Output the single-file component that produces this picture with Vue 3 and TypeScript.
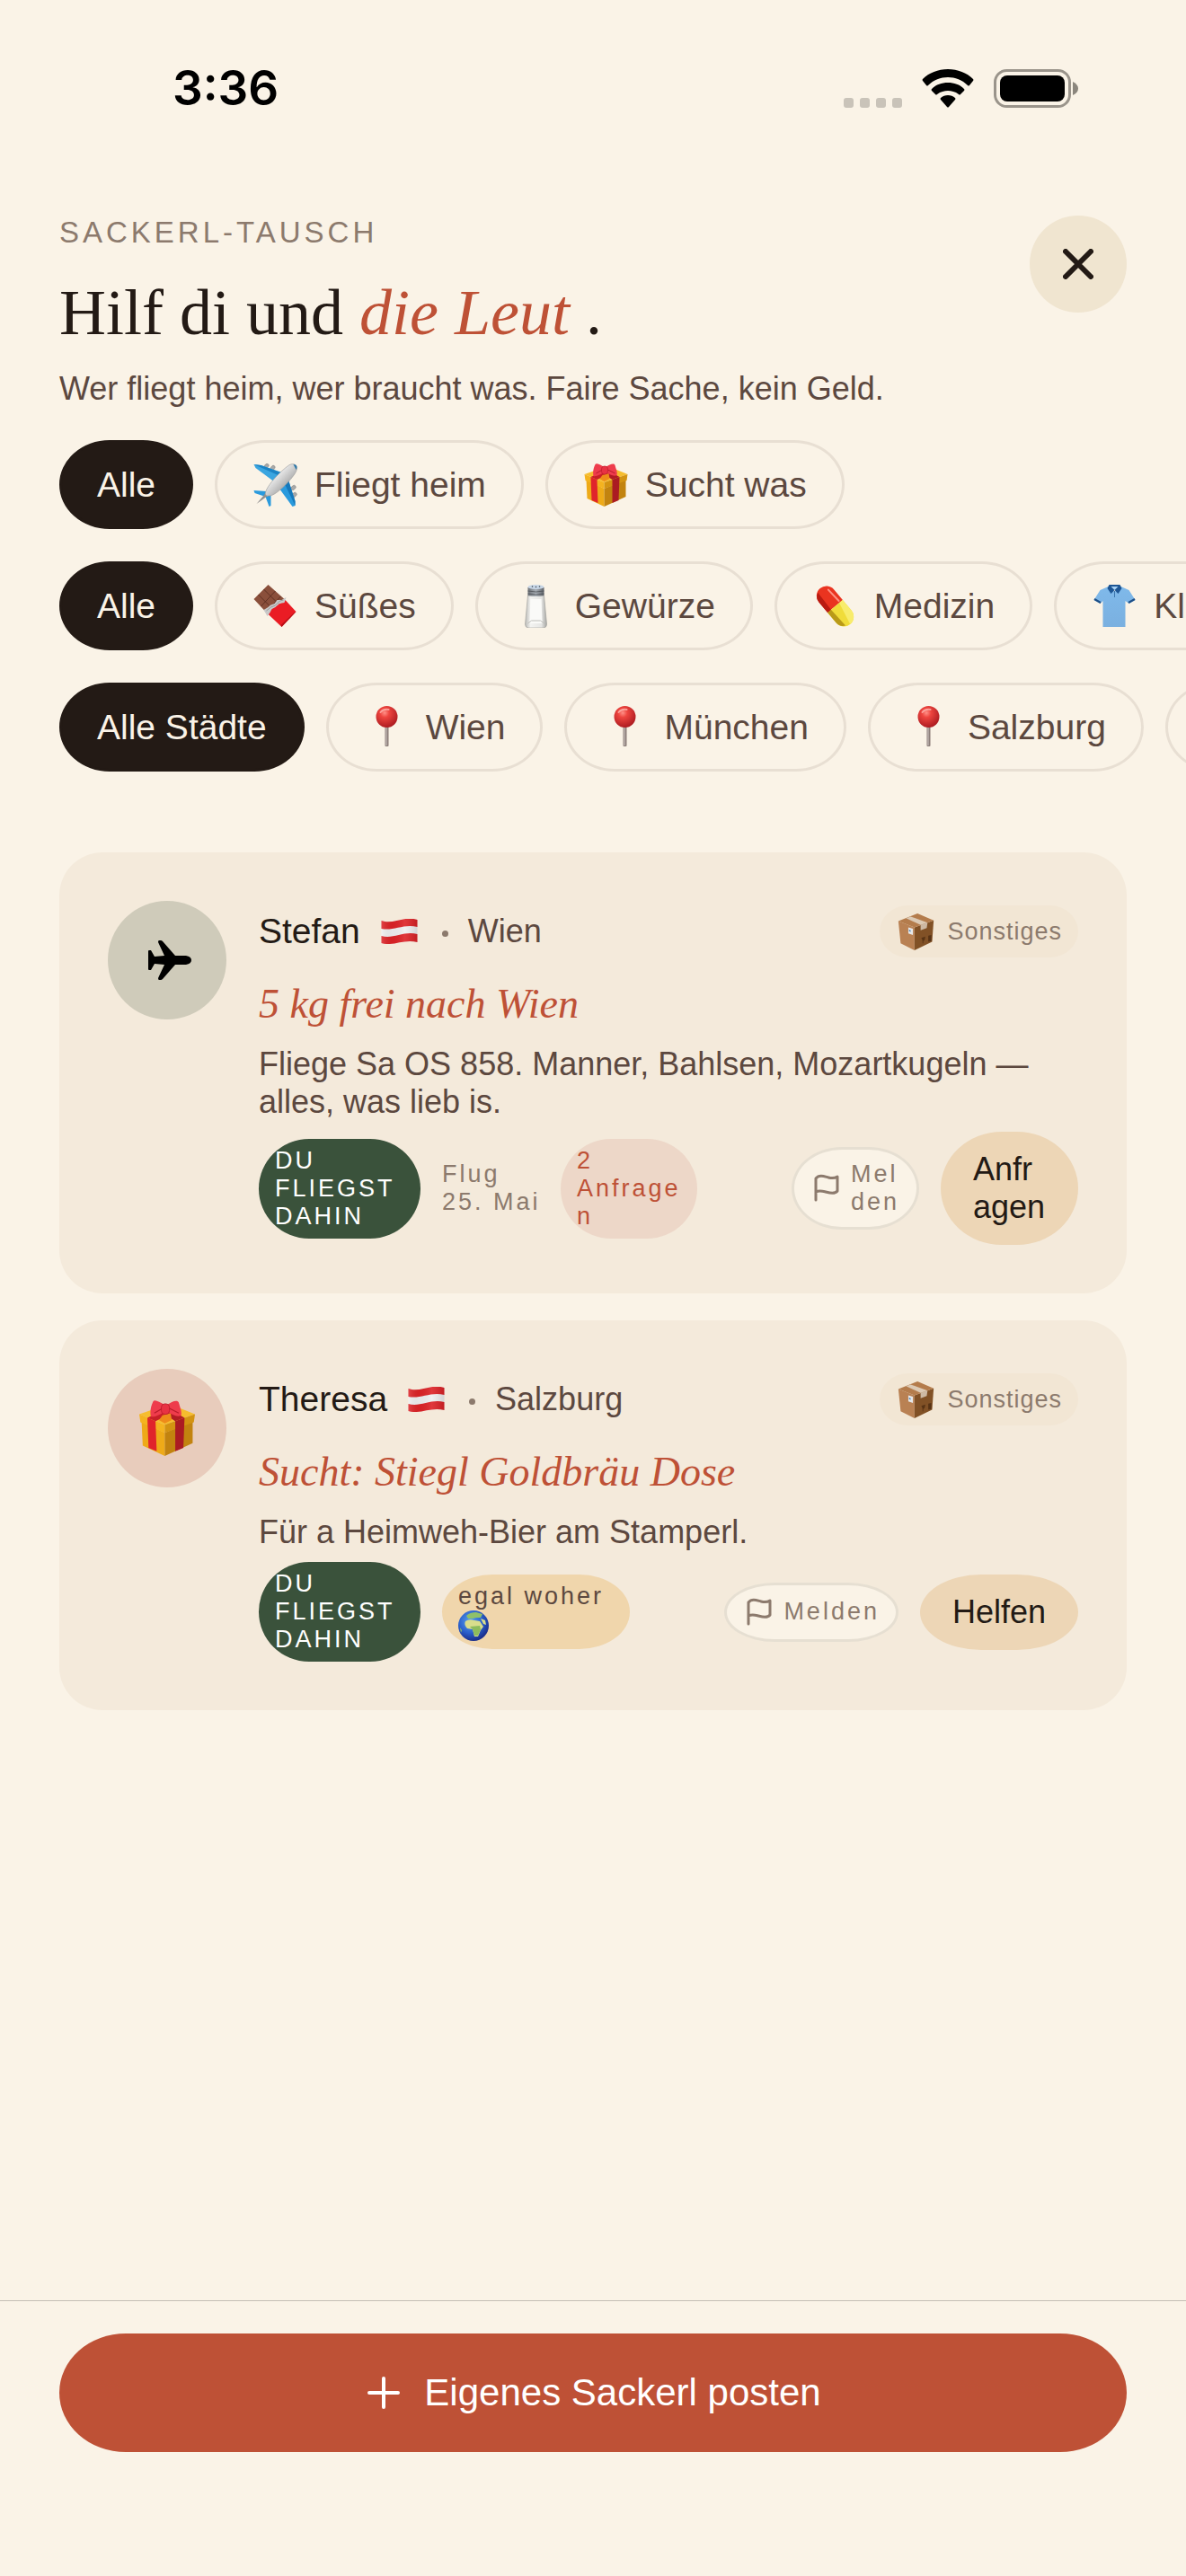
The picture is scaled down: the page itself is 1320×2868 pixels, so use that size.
<script setup lang="ts">
import { ref } from 'vue'

interface Chip {
  label: string
  icon?: string
}

interface Post {
  name: string
  city: string
  kind: 'offer' | 'request'
  title: string
  text: string
  date?: string
  requests?: string
  anywhere?: string
  action: string
}

const filterRows: { name: string; chips: Chip[] }[] = [
  {
    name: 'Art',
    chips: [
      { label: 'Alle' },
      { label: 'Fliegt heim', icon: 'plane' },
      { label: 'Sucht was', icon: 'gift' },
    ],
  },
  {
    name: 'Kategorie',
    chips: [
      { label: 'Alle' },
      { label: 'Süßes', icon: 'chocolate' },
      { label: 'Gewürze', icon: 'salt' },
      { label: 'Medizin', icon: 'pill' },
      { label: 'Kleidung', icon: 'shirt' },
    ],
  },
  {
    name: 'Stadt',
    chips: [
      { label: 'Alle Städte' },
      { label: 'Wien', icon: 'pin' },
      { label: 'München', icon: 'pin' },
      { label: 'Salzburg', icon: 'pin' },
      { label: 'Graz', icon: 'pin' },
    ],
  },
]

const selected = ref<number[]>([0, 0, 0])

const posts: Post[] = [
  {
    name: 'Stefan',
    city: 'Wien',
    kind: 'offer',
    title: '5 kg frei nach Wien',
    text: 'Fliege Sa OS 858. Manner, Bahlsen, Mozartkugeln — alles, was lieb is.',
    date: 'Flug 25.\u00a0Mai',
    requests: '2 Anfragen',
    action: 'Anfragen',
  },
  {
    name: 'Theresa',
    city: 'Salzburg',
    kind: 'request',
    title: 'Sucht: Stiegl Goldbräu Dose',
    text: 'Für a Heimweh-Bier am Stamperl.',
    anywhere: 'egal woher',
    action: 'Helfen',
  },
]
</script>

<template>
  <div class="page">
    <svg class="sprite" width="0" height="0" aria-hidden="true">
      <defs>
        <linearGradient id="g-body" x1="0" y1="0" x2="1" y2="1">
          <stop offset="0.3" stop-color="#f4f4f4" />
          <stop offset="0.7" stop-color="#a9a9a9" />
        </linearGradient>
        <linearGradient id="g-glass" x1="0" y1="0" x2="1" y2="0">
          <stop offset="0" stop-color="#b9b9b6" />
          <stop offset="0.25" stop-color="#f3f3f1" />
          <stop offset="0.75" stop-color="#e6e6e4" />
          <stop offset="1" stop-color="#a5a5a2" />
        </linearGradient>
        <linearGradient id="g-metal" x1="0" y1="0" x2="1" y2="0">
          <stop offset="0" stop-color="#6d7278" />
          <stop offset="0.5" stop-color="#a9afb6" />
          <stop offset="1" stop-color="#5c6066" />
        </linearGradient>
        <radialGradient id="g-pin" cx="0.4" cy="0.32" r="0.7">
          <stop offset="0" stop-color="#ff9087" />
          <stop offset="0.3" stop-color="#ee453f" />
          <stop offset="1" stop-color="#ab1a20" />
        </radialGradient>
        <linearGradient id="g-shirt" x1="0" y1="0" x2="0" y2="1">
          <stop offset="0" stop-color="#7fb9ea" />
          <stop offset="1" stop-color="#7ab0e0" />
        </linearGradient>
        <linearGradient id="g-flag" x1="0" y1="0" x2="1" y2="0">
          <stop offset="0" stop-color="#fff" stop-opacity="0.15" />
          <stop offset="0.3" stop-color="#000" stop-opacity="0.04" />
          <stop offset="0.65" stop-color="#fff" stop-opacity="0.1" />
          <stop offset="1" stop-color="#000" stop-opacity="0.12" />
        </linearGradient>
        <radialGradient id="g-globe" cx="0.4" cy="0.35" r="0.65">
          <stop offset="0" stop-color="#5aa4ee" />
          <stop offset="0.6" stop-color="#2a5fcb" />
          <stop offset="1" stop-color="#1a2f8c" />
        </radialGradient>
      </defs>

      <symbol id="plane" viewBox="0 0 48 48">
        <g fill="#a9a9a9" stroke="#7d7d7d" stroke-width="0.5">
          <rect x="11" y="1" width="6" height="4" rx="2" transform="rotate(-50 14 3)" />
          <rect x="18" y="3" width="6" height="4" rx="2" transform="rotate(-50 21 5)" />
          <rect x="41" y="25" width="6" height="4" rx="2" transform="rotate(-40 44 27)" />
          <rect x="42" y="33" width="6" height="4" rx="2" transform="rotate(-40 45 35)" />
        </g>
        <path d="M0 1 L8 2 L34 11 L25 22 L2 5 Z" fill="#3aa5e0" />
        <path d="M0 1 L8 2 L30 10 L27 13 Z" fill="#1c83c4" />
        <path d="M38 17 L46 42 L46 47 L43 48 L27 26 Z" fill="#2a9add" />
        <path d="M38 17 L46 42 L46 47 L34 22 Z" fill="#1578bb" />
        <path d="M0 30 L14 31 L13 37 L1 33 Z" fill="#2a9add" />
        <path d="M13 37 L19 35 L19 47 L17 48 Z" fill="#2a9add" />
        <path d="M3 45 L14 32 L17 35 Z" fill="#8f8f8f" />
        <path d="M13 35 C11 28 29 9 39 2 C45 -2 50 3 47 9 C42 19 23 37 17 36 C15 36 14 36 13 35 Z" fill="url(#g-body)" stroke="#9b9b9b" stroke-width="0.6" />
        <path d="M44 1 C48 1 49 4 47 7 Z" fill="#2f78a8" />
      </symbol>

      <symbol id="gift" viewBox="0 0 48 48">
        <path d="M2 18 L22 28 L22 48 L3 39 Z" fill="#eeaa18" />
        <path d="M46 18 L22 28 L22 48 L46 37 Z" fill="#c2830f" />
        <path d="M0 12 L26 3 L48 12 L22 21 Z" fill="#f6bd2e" />
        <path d="M0 12 L22 21 L22 28 L1 19 Z" fill="#f4b31f" />
        <path d="M48 12 L22 21 L22 28 L47 19 Z" fill="#d39311" />
        <path d="M7 15 L14 18 L15 44 L8 41 Z" fill="#e0242b" />
        <path d="M31 18 L39 15 L38 41 L31 44 Z" fill="#ab1b22" />
        <path d="M7 15 L30 5 L36 8 L14 18 Z" fill="#c81f27" />
        <path d="M12 6 L18 3 L39 15 L31 18 Z" fill="#b21c23" />
        <path d="M20 13 L27 11 L28 17 L22 20 L17 17 Z" fill="#ee8a1a" />
        <path d="M22 4 C17 1 13 -1 12 1 C10 5 9 10 10 14 C13 15 18 12 22 10 Z" fill="#ee3c4c" />
        <path d="M24 4 C28 1 33 -1 34 2 C35 6 37 10 36 13 C33 15 28 12 24 10 Z" fill="#ee3c4c" />
        <path d="M13 11 L20 7 M34 11 L26 7" stroke="#b91b2a" stroke-width="1" />
        <rect x="19" y="3" width="7" height="9" rx="3" fill="#e83243" stroke="#b91b2a" stroke-width="0.6" />
      </symbol>

      <symbol id="chocolate" viewBox="0 0 48 48">
        <path d="M16 0 L0 16 L14 31 L34 16 Z" fill="#8a4f3b" />
        <path d="M11 5 L28 22 M5 11 L21 27 M24 7 L8 24 M30 13 L14 30" stroke="#5f3022" stroke-width="1" />
        <path d="M14 31 L35 17 L47 30 L31 47 Z" fill="#ea1c24" />
        <path d="M45 31 L47 30 L31 47 L30 45 Z" fill="#b90f17" />
        <path d="M11 28 L16 25 L18 23 L23 21 L26 17 L31 17 L36 14 L34 20 L28 21 L24 25 L20 27 L18 31 L15 35 Z" fill="#c9c9c9" />
        <path d="M14 29 L19 25 L24 23 L29 18 L33 17" stroke="#8e8e8e" stroke-width="0.8" fill="none" />
      </symbol>

      <symbol id="salt" viewBox="0 0 48 48">
        <path d="M15 12 L33 12 L36 44 Q36 48 32 48 L16 48 Q12 48 12 44 Z" fill="url(#g-glass)" stroke="#a3a39f" stroke-width="0.7" />
        <path d="M18 16 L30 16 L31 43 L17 43 Z" fill="#fafaf8" />
        <path d="M15 43 L19 40 L29 40 L33 43" fill="none" stroke="#bcbcb8" stroke-width="1" />
        <path d="M15 3 L33 3 L33 12 Q24 14 15 12 Z" fill="url(#g-metal)" />
        <path d="M15 7 Q24 9 33 7 M15 10 Q24 12 33 10" stroke="#4d5156" stroke-width="0.8" fill="none" />
        <ellipse cx="24" cy="2.5" rx="9" ry="2.5" fill="#c8d6e6" />
        <g fill="#3c4956">
          <circle cx="20" cy="2" r="0.8" />
          <circle cx="24" cy="2.5" r="0.8" />
          <circle cx="28" cy="2" r="0.8" />
        </g>
      </symbol>

      <symbol id="pill" viewBox="0 0 48 48">
        <g transform="rotate(50 24 24)">
          <path d="M24 13 L9 13 A11 11 0 0 0 9 35 L24 35 Z" fill="#ea3420" />
          <path d="M24 13 L39 13 A11 11 0 0 1 39 35 L24 35 Z" fill="#f0dc3a" />
          <path d="M24 13 L39 13 A11 11 0 0 1 50 24 L24 18 Z" fill="#f8ec6c" />
          <path d="M24 30 L48 29 Q45 35 39 35 L24 35 Z" fill="#b99a18" />
          <path d="M24 30 L0 29 Q3 35 9 35 L24 35 Z" fill="#b91b12" />
          <path d="M5 18 L22 17" stroke="#ff9183" stroke-width="2" stroke-linecap="round" />
        </g>
      </symbol>

      <symbol id="shirt" viewBox="0 0 48 48">
        <path d="M17 2 L8 6 L1 17 L8 21 L11 18 L11 47 L36 47 L36 18 L40 21 L47 17 L40 6 L31 2 L24 8 Z" fill="url(#g-shirt)" />
        <path d="M1 17 L2 15 L9 19 L8 21 Z M47 17 L46 15 L39 19 L40 21 Z" fill="#1b4d86" />
        <path d="M18 0 L30 0 L32 4 L28 10 L24 6 L20 10 L16 4 Z" fill="#1d5594" />
        <path d="M20 2 L28 2 L24 6 Z" fill="#a7d2f6" />
        <path d="M24 7 L24 14" stroke="#3d76ad" stroke-width="1" />
      </symbol>

      <symbol id="pin" viewBox="0 0 48 48">
        <rect x="22" y="22" width="4" height="23" rx="1" fill="#8d7f7b" />
        <rect x="23" y="22" width="1" height="22" fill="#cfc8c4" />
        <circle cx="24" cy="12" r="12" fill="url(#g-pin)" />
        <path d="M17 7 Q20 3 26 4" stroke="#ffc2bb" stroke-width="2" fill="none" stroke-linecap="round" opacity="0.7" />
      </symbol>

      <symbol id="package" viewBox="0 0 48 48">
        <path d="M1 10 L22 18 L22 48 L4 39 Z" fill="#b98153" />
        <path d="M47 9 L22 18 L22 48 L45 37 Z" fill="#815126" />
        <path d="M1 10 L26 0 L47 9 L22 18 Z" fill="#b47c4c" />
        <path d="M11 6 L17 4 L39 12 L30 15 Z" fill="#dccab5" />
        <path d="M30 15 L39 12 L38 19 L30 22 Z" fill="#cdb9a4" />
        <path d="M14 18 L20 20 L20 28 L14 26 Z" fill="#e6e8ea" />
        <path d="M15 21 L17 22 L17 24 L15 23 Z" fill="#4b82b5" />
        <path d="M31 32 L36 30 Q36 35 33 36 Z M40 29 L44 28 L44 36 L40 37 Z" fill="#573315" />
        <path d="M33 35 L33 39" stroke="#573315" stroke-width="1" />
      </symbol>

      <symbol id="austria" viewBox="0 0 40 28">
        <path d="M0 2 C13 7 25 -4 40 1 L40 26 C25 22 13 31 0 27 Z" fill="#f0f0f0" />
        <path d="M0 2 C13 7 25 -4 40 1 L40 9 C25 5 13 14 0 11 Z" fill="#dd2226" />
        <path d="M0 19 C13 23 25 13 40 17 L40 26 C25 22 13 31 0 27 Z" fill="#dd2226" />
        <path d="M0 2 C13 7 25 -4 40 1 L40 26 C25 22 13 31 0 27 Z" fill="url(#g-flag)" />
      </symbol>

      <symbol id="globe" viewBox="0 0 34 34">
        <circle cx="17" cy="17" r="17" fill="url(#g-globe)" />
        <path d="M9 6 Q13 2 20 2 L27 4 L25 8 L20 8 L16 9 L11 9 Z" fill="#8fc06a" />
        <path d="M8 12 Q12 9 18 11 L24 12 L28 18 L25 22 L22 29 L18 29 L16 21 L10 20 Q6 16 8 12 Z" fill="#d9dd8c" />
        <path d="M13 18 L24 17 L25 21 L22 28 L18 28 L16 21 Z" fill="#8dbb5c" />
        <path d="M25 9 L30 11 L31 16 L28 15 Z" fill="#d9dd8c" />
        <path d="M2 19 L4 22 L3 25 Z" fill="#8fc06a" />
      </symbol>
    </svg>

    <div class="status-bar">
      <span class="time">3:36</span>
      <div class="status-icons">
        <span class="signal"><i v-for="n in 4" :key="n"></i></span>
        <svg width="58" height="43" viewBox="0 0 58 43" aria-hidden="true">
          <path d="M29 0 C40 0 50 4 57 11 Q58 12 57 13 L53 18 Q52 19 51 18 C45 12 37 9 29 9 C21 9 13 12 7 18 Q6 19 5 18 L1 13 Q0 12 1 11 C8 4 18 0 29 0 Z" />
          <path d="M29 15 C36 15 42 17 47 22 Q48 23 47 24 L43 28 Q42 29 41 28 C37 25 33 24 29 24 C25 24 21 25 17 28 Q16 29 15 28 L11 24 Q10 23 11 22 C16 17 22 15 29 15 Z" />
          <path d="M29 29 C32 29 35 30 37 32 Q38 33 37 34 L30 42 Q29 43 28 42 L21 34 Q20 33 21 32 C23 30 26 29 29 29 Z" />
        </svg>
        <svg width="94" height="43" viewBox="0 0 94 43" aria-hidden="true">
          <rect x="1.5" y="1.5" width="83" height="40" rx="13" fill="none" stroke="#9a948b" stroke-width="3" />
          <rect x="7" y="7" width="72" height="29" rx="8" />
          <path d="M88 14 Q94 17 94 21.5 Q94 26 88 29 Z" fill="#8b867d" />
        </svg>
      </div>
    </div>

    <header class="header">
      <div>
        <p class="eyebrow">SACKERL-TAUSCH</p>
        <h1 class="title"><span>Hilf di und</span><em>die Leut</em><span>.</span></h1>
        <p class="subtitle">Wer fliegt heim, wer braucht was. Faire Sache, kein Geld.</p>
      </div>
      <button class="close" type="button" aria-label="Schließen">
        <svg width="34" height="34" viewBox="0 0 34 34" aria-hidden="true">
          <path d="M3 3 L31 31 M31 3 L3 31" stroke="currentColor" stroke-width="6" stroke-linecap="round" />
        </svg>
      </button>
    </header>

    <div class="filters">
      <div v-for="(row, r) in filterRows" :key="row.name" class="chip-row" role="group" :aria-label="row.name">
        <button
          v-for="(chip, c) in row.chips"
          :key="chip.label"
          type="button"
          class="chip"
          :class="{ active: selected[r] === c }"
          :aria-pressed="selected[r] === c"
          @click="selected[r] = c"
        >
          <svg v-if="chip.icon" class="chip-icon" aria-hidden="true"><use :href="'#' + chip.icon" /></svg>
          <span>{{ chip.label }}</span>
        </button>
      </div>
    </div>

    <main class="posts">
      <article v-for="post in posts" :key="post.name" class="card">
        <div class="avatar" :class="post.kind">
          <svg v-if="post.kind === 'offer'" width="54" height="44" viewBox="-6 0 54 44" aria-hidden="true">
            <path d="M0 12 Q0 11 1 11 L3 11 L7 18 L18 17 L11 2 Q11 0 12 0 L14 0 Q15 0 16 1 L30 17 L42 17 Q48 18 48 22 Q48 26 42 27 L30 27 L16 43 Q15 44 14 44 L12 44 Q11 44 11 42 L18 27 L7 26 L3 33 L1 33 Q0 33 0 32 Z" />
          </svg>
          <svg v-else width="62" height="62" aria-hidden="true"><use href="#gift" /></svg>
        </div>
        <div class="content">
          <div class="meta">
            <span class="name">{{ post.name }}</span>
            <svg class="flag" role="img" aria-label="Österreich"><use href="#austria" /></svg>
            <span class="dot"></span>
            <span class="city">{{ post.city }}</span>
            <span class="category">
              <svg width="45" height="41" aria-hidden="true"><use href="#package" /></svg>
              Sonstiges
            </span>
          </div>
          <h2 class="post-title">{{ post.title }}</h2>
          <p class="text">{{ post.text }}</p>
          <div class="actions">
            <span class="tag match">DU FLIEGST DAHIN</span>
            <span v-if="post.date" class="date">{{ post.date }}</span>
            <span v-if="post.requests" class="tag requests">{{ post.requests }}</span>
            <span v-if="post.anywhere" class="tag anywhere">
              {{ post.anywhere }}
              <svg width="34" height="34" aria-hidden="true"><use href="#globe" /></svg>
            </span>
            <button class="report" :class="{ narrow: post.requests }" type="button">
              <svg width="36" height="36" viewBox="0 0 36 36" fill="none" stroke="currentColor" stroke-width="3" stroke-linecap="round" stroke-linejoin="round" aria-hidden="true">
                <path d="M6 31 V7 C10 2 16 5 20 6 C24 7 27 7 30 5 V21 C27 25 21 23 17 22 C13 21 10 20 6 22" />
              </svg>
              <span>Melden</span>
            </button>
            <button class="action" :class="{ narrow: post.requests }" type="button">{{ post.action }}</button>
          </div>
        </div>
      </article>
    </main>

    <footer class="footer">
      <button class="post-button" type="button">
        <svg width="42" height="42" viewBox="0 0 42 42" aria-hidden="true">
          <path d="M21 5 V37 M5 21 H37" stroke="currentColor" stroke-width="4" stroke-linecap="round" />
        </svg>
        Eigenes Sackerl posten
      </button>
    </footer>
  </div>
</template>

<style>
body {
  margin: 0;
  background: #faf3e7;
}
</style>

<style scoped>
.page {
  box-sizing: border-box;
  display: flex;
  flex-direction: column;
  min-height: 100vh;
  overflow: hidden;
  background: #faf3e7;
  color: #231a15;
  font-family: "Liberation Sans", Arial, sans-serif;
  font-size: 36px;
  line-height: 42px;
}

.page * {
  box-sizing: border-box;
}

.sprite {
  position: absolute;
}

svg {
  flex: none;
}

button {
  margin: 0;
  border: 0;
  font: inherit;
  color: inherit;
  cursor: pointer;
}

p,
h1,
h2 {
  margin: 0;
  font-weight: 400;
}

.status-bar {
  display: flex;
  justify-content: space-between;
  align-items: center;
  height: 196px;
  padding: 0 120px 0 192px;
  color: #000;
}

.time {
  font: 600 53px/60px Inter, sans-serif;
}

.status-icons {
  display: flex;
  align-items: flex-end;
  gap: 22px;
}

.signal {
  display: flex;
  gap: 7px;
}

.signal i {
  width: 11px;
  height: 11px;
  border-radius: 3px;
  background: #c9c3b9;
}

.header {
  display: flex;
  justify-content: space-between;
  align-items: flex-start;
  padding: 44px 66px 36px;
}

.eyebrow {
  font-size: 33px;
  line-height: 38px;
  letter-spacing: 4px;
  color: #8c7a6d;
}

.title {
  display: flex;
  gap: 18px;
  margin: 12px 0 6px;
  font-family: "Liberation Serif", "Times New Roman", serif;
  font-size: 72px;
  line-height: 116px;
}

.title em {
  color: #be5136;
}

.subtitle {
  color: #5c483f;
}

.close {
  display: flex;
  align-items: center;
  justify-content: center;
  width: 108px;
  height: 108px;
  padding: 0;
  border-radius: 50%;
  background: #f0e5d0;
}

.filters {
  display: flex;
  flex-direction: column;
  gap: 36px;
}

.chip-row {
  display: flex;
  gap: 24px;
  padding-left: 66px;
  overflow: hidden;
}

.chip {
  flex: none;
  display: flex;
  align-items: center;
  gap: 18px;
  height: 99px;
  padding: 0 39px;
  border: 3px solid #e8dfd3;
  border-radius: 56px / 50%;
  background: transparent;
  color: #5c483f;
  font-size: 39px;
  white-space: nowrap;
}

.chip.active {
  border-color: #231a15;
  background: #231a15;
  color: #faf3e7;
}

.chip-icon {
  width: 51px;
  height: 48px;
}

.posts {
  display: flex;
  flex-direction: column;
  gap: 30px;
  padding: 90px 66px 36px;
}

.card {
  display: flex;
  align-items: flex-start;
  gap: 36px;
  padding: 54px;
  border-radius: 48px;
  background: #f4eadb;
}

.avatar {
  flex: none;
  display: flex;
  align-items: center;
  justify-content: center;
  width: 132px;
  height: 132px;
  border-radius: 50%;
}

.avatar.offer {
  background: #cfcbba;
}

.avatar.request {
  background: #e8ccbc;
}

.avatar svg {
  fill: #000;
}

.content {
  flex: 1;
  min-width: 0;
}

.meta {
  display: flex;
  align-items: center;
  gap: 18px;
  height: 68px;
}

.name {
  font-size: 39px;
}

.flag {
  width: 51px;
  height: 28px;
}

.dot {
  width: 7px;
  height: 7px;
  margin: 4px 4px 0;
  border-radius: 50%;
  background: #8c7a6d;
}

.city {
  color: #5c483f;
}

.category {
  display: flex;
  align-items: center;
  gap: 12px;
  height: 58px;
  margin-left: auto;
  padding: 0 18px;
  border-radius: 32px / 50%;
  background: #f2e6d4;
  color: #8c7a6d;
  font-size: 27px;
  letter-spacing: 1px;
}

.post-title {
  margin: 12px 0;
  font-family: "Liberation Serif", "Times New Roman", serif;
  font-size: 46px;
  font-style: italic;
  line-height: 69px;
  color: #be5136;
}

.text {
  color: #5c483f;
}

.actions {
  display: flex;
  align-items: center;
  gap: 24px;
  margin-top: 12px;
}

.tag,
.date,
.report {
  font-size: 27px;
  line-height: 31px;
  letter-spacing: 3px;
}

.tag {
  flex: none;
  padding: 9px 18px;
  border-radius: 56px / 50%;
  overflow-wrap: anywhere;
}

.match {
  width: 180px;
  background: #3a523b;
  color: #fff;
}

.date {
  flex: none;
  width: 108px;
  color: #8c7a6d;
}

.requests {
  width: 152px;
  background: #edd7c8;
  color: #be5136;
}

.anywhere {
  display: flex;
  flex-direction: column;
  width: 209px;
  background: #f0d6ac;
  color: #5c483f;
}

.report {
  display: flex;
  align-items: center;
  gap: 9px;
  margin-left: auto;
  padding: 12px 18px;
  border: 3px solid #e6dfd2;
  border-radius: 56px / 50%;
  background: #faf3e7;
  color: #8c7a6d;
  text-align: left;
  overflow-wrap: anywhere;
}

.report.narrow {
  width: 142px;
}

.action {
  padding: 21px 36px;
  border-radius: 68px / 50%;
  background: #edd6b6;
  text-align: left;
  overflow-wrap: anywhere;
}

.action.narrow {
  width: 153px;
}

.footer {
  margin-top: auto;
  padding: 36px 66px 138px;
  border-top: 1px solid #c3beb4;
}

.post-button {
  display: flex;
  align-items: center;
  justify-content: center;
  gap: 24px;
  width: 100%;
  height: 132px;
  padding: 0;
  border-radius: 74px / 50%;
  background: #be5136;
  color: #fff;
  font-size: 42px;
}
</style>
